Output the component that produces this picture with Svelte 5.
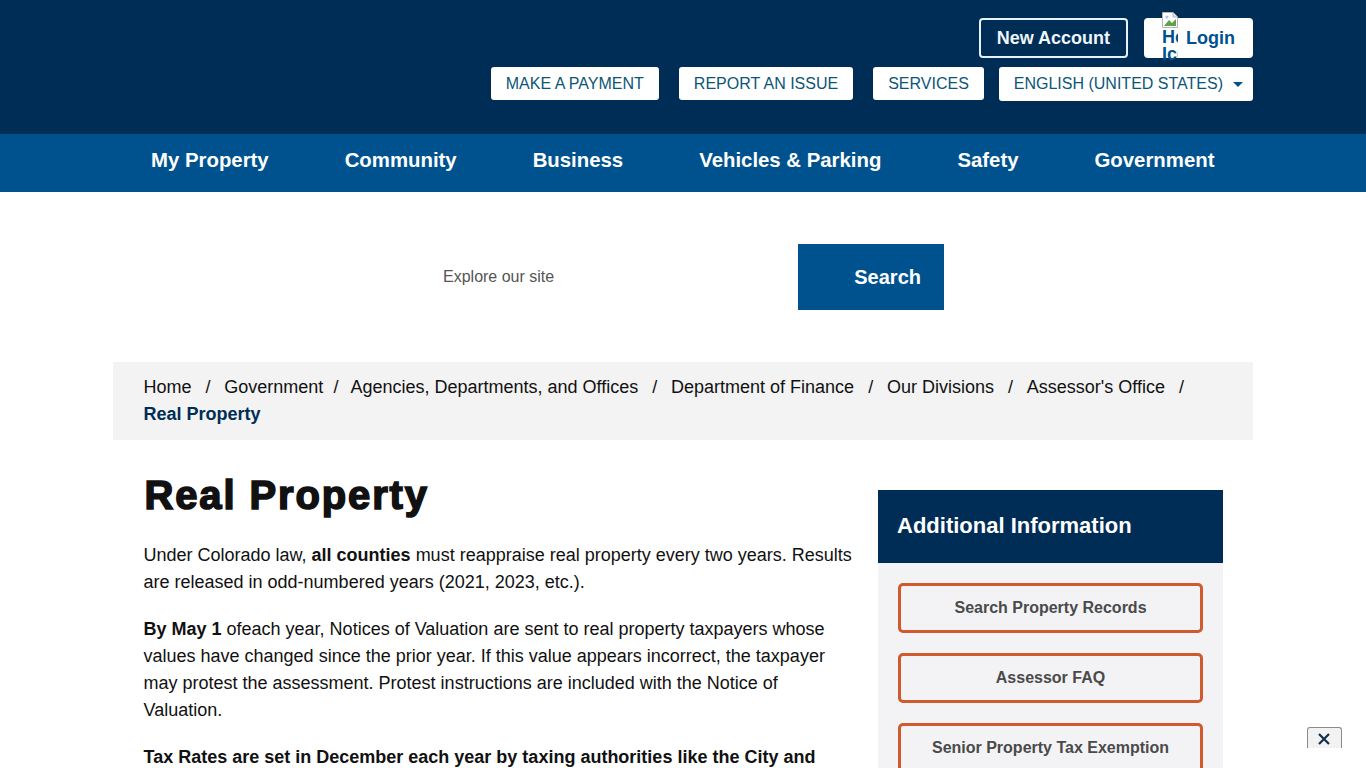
<script>
    const topLinks = ["MAKE A PAYMENT", "REPORT AN ISSUE", "SERVICES"];
    const navItems = ["My Property", "Community", "Business", "Vehicles & Parking", "Safety", "Government"];
    const crumbs = ["Government", "Agencies, Departments, and Offices", "Department of Finance", "Our Divisions", "Assessor's Office"];
    const sideLinks = ["Search Property Records", "Assessor FAQ", "Senior Property Tax Exemption"];
</script>

<div class="page">
    <header class="masthead">
        <div class="wrap">
            <div class="account-row">
                <a class="btn-outline" href="#new">New Account</a>
                <a class="btn-login" href="#login">
                    <span class="broken-img">
                        <svg width="16" height="16" viewBox="0 0 16 16">
                            <path d="M0.5 0.5H11L15.5 5V15.5H0.5Z" fill="#fff" stroke="#b5b5b5" />
                            <path d="M11 0.5V5H15.5" fill="#e8e8e8" stroke="#b5b5b5" />
                            <path d="M2 14L7 8L10 11L14 7V14Z" fill="#5da24a" />
                            <circle cx="5" cy="5" r="1.6" fill="#a9c4ec" />
                        </svg>
                        <span class="broken-alt">Home Icon</span>
                    </span>
                    Login
                </a>
            </div>
            <div class="link-row">
                {#each topLinks as link}
                    <a class="top-link" href="#top">{link}</a>
                {/each}
                <a class="top-link lang" href="#lang">ENGLISH (UNITED STATES)<span class="caret"></span></a>
            </div>
        </div>
    </header>

    <nav class="mainnav">
        {#each navItems as item}
            <a href="#nav">{item}</a>
        {/each}
    </nav>

    <div class="search">
        <div class="search-field">Explore our site</div>
        <div class="search-btn">Search</div>
    </div>

    <div class="breadcrumb">
        <a href="#home">Home</a><span class="sep">/</span>{#each crumbs as crumb, i}<a href="#crumb">{crumb}</a><span class="sep" class:tight={i === 0}>/</span>{/each}
        <strong>Real Property</strong>
    </div>

    <div class="content">
        <main class="article">
            <h1>Real Property</h1>
            <p>Under Colorado law, <strong>all counties</strong> must reappraise real property every two years. Results are released in odd-numbered years (2021, 2023, etc.).</p>
            <p><strong>By May 1</strong> ofeach year, Notices of Valuation are sent to real property taxpayers whose values have changed since the prior year. If this value appears incorrect, the taxpayer may protest the assessment. Protest instructions are included with the Notice of Valuation.</p>
            <p><strong>Tax Rates are set in December each year by taxing authorities like the City and</strong></p>
        </main>
        <aside class="sidebar">
            <h2>Additional Information</h2>
            <div class="side-links">
                {#each sideLinks as link}
                    <a href="#side">{link}</a>
                {/each}
            </div>
        </aside>
    </div>

    <button class="close-tab" aria-label="Close">
        <svg width="12" height="12" viewBox="0 0 12 12">
            <path d="M1 1L11 11M11 1L1 11" stroke="#12304f" stroke-width="2.2" fill="none" />
        </svg>
    </button>
</div>

<style>
    :global(body) {
        margin: 0;
        overflow: hidden;
    }
    .page {
        height: 768px;
        overflow: hidden;
        font-family: "Liberation Sans", Arial, sans-serif;
        color: #111;
        font-size: 18px;
        background: #fff;
    }
    a {
        text-decoration: none;
        color: inherit;
    }
    .masthead {
        background: #002d56;
        height: 134px;
        box-sizing: border-box;
        padding: 18px 113px 0;
    }
    .wrap {
        display: flex;
        flex-direction: column;
        align-items: flex-end;
        gap: 9px;
    }
    .account-row {
        display: flex;
        gap: 16px;
        height: 40px;
    }
    .btn-outline, .btn-login {
        box-sizing: border-box;
        height: 40px;
        border-radius: 4px;
        font-weight: 700;
        display: flex;
        align-items: center;
    }
    .btn-outline {
        border: 2px solid #e6f2f8;
        color: #eef6fb;
        padding: 0 16px;
    }
    .btn-login {
        background: #fff;
        color: #00528f;
        padding: 0 18px;
        gap: 8px;
    }
    .broken-img {
        width: 16px;
        height: 50px;
        align-self: flex-start;
        margin-top: -6px;
        overflow: hidden;
        display: block;
        font-size: 18px;
        line-height: 17px;
    }
    .broken-img svg {
        display: block;
    }
    .broken-alt {
        display: block;
        margin-top: 1px;
    }
    .link-row {
        display: flex;
        align-items: flex-start;
        gap: 20px;
    }
    .top-link {
        box-sizing: border-box;
        height: 33px;
        background: #fff;
        border-radius: 3px;
        color: #0b5678;
        font-size: 16px;
        padding: 0 15px;
        display: flex;
        align-items: center;
    }
    .lang {
        margin-left: -5px;
        height: 34px;
        padding-right: 10px;
    }
    .caret {
        margin-left: 10px;
        border-top: 5px solid #00528f;
        border-left: 5px solid transparent;
        border-right: 5px solid transparent;
    }
    .mainnav {
        background: #00528f;
        height: 58px;
        box-sizing: border-box;
        padding: 14px 0 0 151px;
        display: flex;
        gap: 76px;
        color: #fff;
        font-weight: 700;
        font-size: 20.38px;
        line-height: 24px;
    }
    .search {
        display: flex;
        height: 66px;
        margin: 52px 0 0 443px;
    }
    .search-field {
        width: 355px;
        color: #555;
        font-size: 16px;
        display: flex;
        align-items: center;
    }
    .search-btn {
        width: 146px;
        box-sizing: border-box;
        background: #00528f;
        color: #fff;
        font-weight: 700;
        font-size: 20px;
        display: flex;
        align-items: center;
        justify-content: flex-end;
        padding-right: 23px;
    }
    .breadcrumb {
        margin: 52px 113px 0;
        background: #f3f3f3;
        padding: 12px 30px 13px 30.5px;
        line-height: 27px;
        height: 78px;
        box-sizing: border-box;
    }
    .breadcrumb strong {
        color: #002d56;
    }
    .sep {
        margin: 0 13.8px 0 14px;
    }
    .sep.tight {
        margin: 0 12px 0 10px;
    }
    .content {
        display: flex;
        padding: 30px 143px 0 143.5px;
        justify-content: space-between;
    }
    .article {
        width: 712px;
        line-height: 27px;
    }
    h1 {
        font-size: 40px;
        font-weight: 700;
        letter-spacing: 1.87px;
        -webkit-text-stroke: 1.6px #111;
        line-height: 50px;
        margin: 0 0 22px;
        padding-left: 1px;
        color: #111;
    }
    .article p {
        margin: 0 0 20px;
    }
    .sidebar {
        width: 345px;
        margin-top: 20px;
        background: #f3f3f5;
    }
    h2 {
        margin: 0;
        background: #002d56;
        color: #fff;
        font-size: 22px;
        line-height: 28px;
        padding: 22px 20px 23px 19px;
    }
    .side-links {
        display: flex;
        flex-direction: column;
        gap: 20px;
        padding: 20px;
    }
    .side-links a {
        box-sizing: border-box;
        height: 50px;
        border: 3px solid #cf5a2d;
        border-radius: 5px;
        color: #4a4a4a;
        font-weight: 700;
        font-size: 16px;
        display: flex;
        align-items: center;
        justify-content: center;
    }
    .close-tab {
        position: absolute;
        left: 1307px;
        top: 727px;
        width: 35px;
        height: 21px;
        box-sizing: border-box;
        background: #f2f2f2;
        border: 1px solid #8a8a8a;
        border-bottom: none;
        border-radius: 3px 3px 0 0;
        display: flex;
        justify-content: center;
        padding: 5px 1px 0 0;
    }
</style>
